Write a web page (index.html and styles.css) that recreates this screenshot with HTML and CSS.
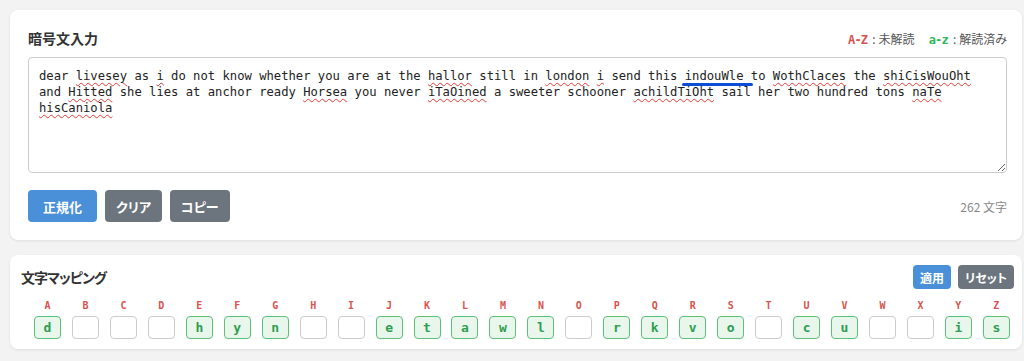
FILE: index.html
```html
<!DOCTYPE html>
<html lang="ja">
  <head>
    <meta charset="utf-8">
    <title>暗号解読</title>
    <link rel="stylesheet" href="styles.css">
  </head>
  <body>
    <section class="card input-card">
      <div class="card-head">
        <h2 class="card-title">暗号文入力</h2>
        <div class="legend">
          <span class="legend-item"><b class="enc">A-Z</b><span class="sep">:</span>未解読</span>
          <span class="legend-item"><b class="dec">a-z</b><span class="sep">:</span>解読済み</span>
        </div>
      </div>

      <div class="cipher-box">dear <span class="typo">livesey</span> as <span class="typo">i</span> do not know whether you are at the <span class="typo">hallor</span> still in <span class="typo">london</span> <span class="typo">i</span> send this <span class="ime">indouWle</span> to <span class="typo">WothClaces</span> the <span class="typo">shiCisWouOht</span> and <span class="typo">Hitted</span> she lies at anchor ready <span class="typo">Horsea</span> you never <span class="typo">iTaOined</span> a sweeter schooner <span class="typo">achildTiOht</span> sail her two hundred tons <span class="typo">naTe</span> <span class="typo">hisCaniola</span></div>

      <div class="actions">
        <button class="btn btn-primary">正規化</button>
        <button class="btn btn-gray">クリア</button>
        <button class="btn btn-gray">コピー</button>
        <span class="count">262 文字</span>
      </div>
    </section>

    <section class="card map-card">
      <div class="card-head map-head">
        <h2 class="card-title map-title">文字マッピング</h2>
        <div class="head-btns">
          <button class="btn btn-sm btn-primary">適用</button>
          <button class="btn btn-sm btn-gray">リセット</button>
        </div>
      </div>

      <div class="map-row">
        <div class="cell"><span class="lbl">A</span><span class="box done">d</span></div>
        <div class="cell"><span class="lbl">B</span><span class="box"></span></div>
        <div class="cell"><span class="lbl">C</span><span class="box"></span></div>
        <div class="cell"><span class="lbl">D</span><span class="box"></span></div>
        <div class="cell"><span class="lbl">E</span><span class="box done">h</span></div>
        <div class="cell"><span class="lbl">F</span><span class="box done">y</span></div>
        <div class="cell"><span class="lbl">G</span><span class="box done">n</span></div>
        <div class="cell"><span class="lbl">H</span><span class="box"></span></div>
        <div class="cell"><span class="lbl">I</span><span class="box"></span></div>
        <div class="cell"><span class="lbl">J</span><span class="box done">e</span></div>
        <div class="cell"><span class="lbl">K</span><span class="box done">t</span></div>
        <div class="cell"><span class="lbl">L</span><span class="box done">a</span></div>
        <div class="cell"><span class="lbl">M</span><span class="box done">w</span></div>
        <div class="cell"><span class="lbl">N</span><span class="box done">l</span></div>
        <div class="cell"><span class="lbl">O</span><span class="box"></span></div>
        <div class="cell"><span class="lbl">P</span><span class="box done">r</span></div>
        <div class="cell"><span class="lbl">Q</span><span class="box done">k</span></div>
        <div class="cell"><span class="lbl">R</span><span class="box done">v</span></div>
        <div class="cell"><span class="lbl">S</span><span class="box done">o</span></div>
        <div class="cell"><span class="lbl">T</span><span class="box"></span></div>
        <div class="cell"><span class="lbl">U</span><span class="box done">c</span></div>
        <div class="cell"><span class="lbl">V</span><span class="box done">u</span></div>
        <div class="cell"><span class="lbl">W</span><span class="box"></span></div>
        <div class="cell"><span class="lbl">X</span><span class="box"></span></div>
        <div class="cell"><span class="lbl">Y</span><span class="box done">i</span></div>
        <div class="cell"><span class="lbl">Z</span><span class="box done">s</span></div>
      </div>
    </section>
  </body>
</html>
```

FILE: styles.css
```css
* {
  box-sizing: border-box;
}
body {
  margin: 0;
  padding: 10px 2px 10px 10px;
  background: #f3f3f3;
  font-family: "Noto Sans CJK JP", "Noto Sans", sans-serif;
  font-feature-settings: "palt";
  color: #333;
}

.card {
  background: #fff;
  border-radius: 8px;
  box-shadow: 0 1px 3px rgba(0, 0, 0, 0.09);
}
.card + .card {
  margin-top: 15px;
}
.card-head {
  display: flex;
  justify-content: space-between;
  align-items: center;
  height: 20px;
}
.card-title {
  margin: 0;
  font-size: 14px;
  font-weight: bold;
  color: #333;
}

/* -- input card -- */
.input-card {
  padding: 18px 15px 18px 18px;
}
.legend {
  display: flex;
  gap: 14px;
  font-size: 12px;
  color: #555;
}
.legend-item {
  white-space: nowrap;
}
.legend b {
  font-family: "DejaVu Sans Mono", monospace;
  font-size: 12px;
  letter-spacing: -0.8px;
}
.sep {
  margin: 0 3px 0 5px;
}
.enc {
  color: #d9534f;
}
.dec {
  color: #2fb45a;
}

.cipher-box {
  margin-top: 9px;
  height: 116px;
  border: 1px solid #ccc;
  border-radius: 4px;
  padding: 10px;
  font-family: "DejaVu Sans Mono", monospace;
  font-size: 12.2px;
  line-height: 16px;
  color: #222;
  overflow: auto;
  resize: vertical;
}
.typo {
  text-decoration: underline wavy #e53935;
  text-decoration-thickness: 1px;
  text-underline-offset: 2px;
}
.ime {
  position: relative;
}
.ime::after {
  content: "";
  position: absolute;
  left: -3px;
  right: -10px;
  bottom: -3px;
  height: 3px;
  border-radius: 2px;
  background: #0a4fd6;
}

.actions {
  display: flex;
  align-items: center;
  gap: 8px;
  margin-top: 17px;
}
.count {
  margin-left: auto;
  font-size: 12px;
  color: #888;
}

.btn {
  height: 32px;
  padding: 0 15px;
  border: none;
  border-radius: 4px;
  color: #fff;
  font-family: inherit;
  font-feature-settings: "palt";
  font-size: 13px;
  font-weight: bold;
}
.btn-primary {
  background: #4a90d9;
}
.btn-gray {
  background: #6c757d;
  padding: 0 11px;
}
.btn-sm {
  height: 24px;
  padding: 0 7px;
  font-size: 12px;
}

/* -- mapping card -- */
.map-card {
  padding: 10px 8px 10px 11px;
}
.map-head {
  height: 24px;
}
.map-title {
  letter-spacing: -1px;
}
.head-btns {
  display: flex;
  gap: 7px;
}
.map-row {
  display: flex;
  justify-content: space-between;
  margin: 11px 4px 0 13px;
}
.cell {
  display: flex;
  flex-direction: column;
  align-items: center;
  width: 27px;
  gap: 4px;
}
.lbl {
  font-family: "DejaVu Sans Mono", monospace;
  font-size: 10px;
  line-height: 12px;
  font-weight: bold;
  color: #d9534f;
}
.box {
  width: 27px;
  height: 23px;
  border: 1px solid #ccc;
  border-radius: 4px;
  background: #fff;
  display: flex;
  align-items: center;
  justify-content: center;
  font-family: "DejaVu Sans Mono", monospace;
  font-size: 13px;
  font-weight: bold;
  color: #2e9e50;
}
.box.done {
  border: 1.5px solid #5cc07a;
  background: #e8f6ec;
}
```
